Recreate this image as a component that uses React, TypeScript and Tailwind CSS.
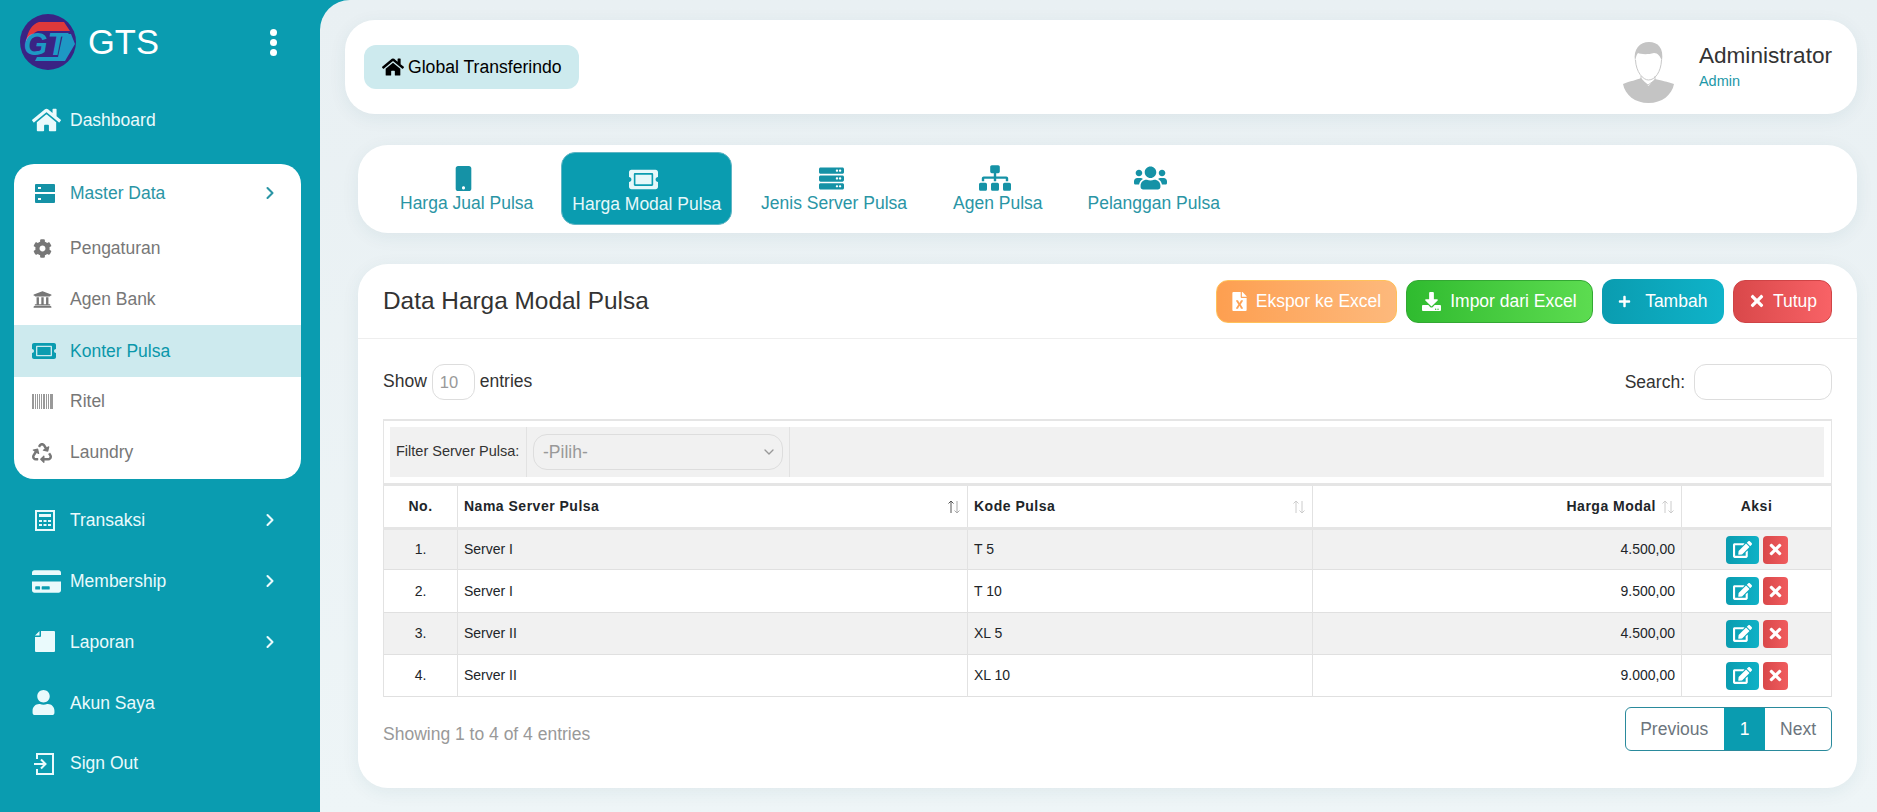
import React from "react";
import {
  FaHome,
  FaCog,
  FaUniversity,
  FaTicketAlt,
  FaRecycle,
  FaCreditCard,
  FaUser,
  FaMobile,
  FaServer,
  FaSitemap,
  FaUsers,
  FaFileExcel,
  FaDownload,
  FaPlus,
  FaTimes,
  FaEdit,
} from "react-icons/fa";
import { ChevronRight, ChevronDown } from "lucide-react";

const FONT = "font-['Liberation_Sans',Arial,sans-serif]";

function LogoMark() {
  return (
    <svg viewBox="0 0 56 56" className="w-[56px] h-[56px] shrink-0">
      <circle cx="28" cy="28" r="28" fill="#3a2384" />
      <path d="M6 27 C8 17 12 10 19 8 L44 8 L50 17 L18 17 C13 19 10 23 9 27 Z" fill="#e0393a" />
      <path d="M43 20 L51 20 L55 30 L45 47 L15 47 L17 43 L38 43 Z" fill="#1d98c4" />
      <text x="25" y="41" textAnchor="middle" fontFamily="Liberation Sans" fontWeight="700" fontStyle="italic" fontSize="31" fill="#1d98c4">
        GT
      </text>
    </svg>
  );
}

function TwoRackIcon() {
  return (
    <svg viewBox="0 0 20 19" className="w-[20px] h-[19px] ml-[3px]" fill="currentColor">
      <path d="M1 0h18a1 1 0 0 1 1 1v7H0V1a1 1 0 0 1 1-1zM3 3v2h3V3zM0 10h20v8a1 1 0 0 1-1 1H1a1 1 0 0 1-1-1zM3 14v2h3v-2z" fillRule="evenodd" />
    </svg>
  );
}

function BarcodeThin() {
  return (
    <svg viewBox="0 0 21 15" className="w-[21px] h-[15px]" fill="#999">
      <rect x="0" width="2" height="15" />
      <rect x="3" width="1" height="15" />
      <rect x="5" width="1" height="15" />
      <rect x="7" width="1" height="15" />
      <rect x="9" width="1" height="15" />
      <rect x="11" width="2" height="15" />
      <rect x="14" width="1" height="15" />
      <rect x="16" width="1" height="15" />
      <rect x="18" width="3" height="15" />
    </svg>
  );
}

function CalcIcon() {
  return (
    <svg viewBox="0 0 20 21" className="w-[20px] h-[21px] ml-[3px]">
      <rect x="1" y="1" width="18" height="19" fill="none" stroke="#eafafc" strokeWidth="2" />
      <rect x="4" y="4" width="12" height="3" fill="#eafafc" />
      <path d="M4 10h3v2H4zM8.500 10h3v2h-3zM13 10h3v2h-3zM4 14h3v2H4zM8.500 14h3v2h-3zM13 14h3v2h-3z" fill="#eafafc" />
    </svg>
  );
}

function FileCutIcon() {
  return (
    <svg viewBox="0 0 20 21" className="w-[20px] h-[21px] ml-[3px]" fill="#eafafc">
      <path d="M6 0h13a1 1 0 0 1 1 1v19a1 1 0 0 1-1 1H1a1 1 0 0 1-1-1V6h5a1 1 0 0 0 1-1zM0 4.500L4.500 0v4.500z" />
    </svg>
  );
}

function SignInIcon() {
  return (
    <svg viewBox="0 0 20 22" className="w-[20px] h-[22px] ml-[2px]" fill="none" stroke="#eafafc" strokeWidth="2">
      <path d="M3 6V1h16v20H3v-5" />
      <path d="M0 11h10" />
      <path d="M7 6.500l4.500 4.500L7 15.500" />
    </svg>
  );
}

function SortArrows({ dark }: { dark?: boolean }) {
  return (
    <svg viewBox="0 0 14 14" className="w-[14px] h-[14px] shrink-0" fill="none" strokeWidth="1">
      <path d="M4 13V1M1.500 3.500L4 1l2.500 2.500" stroke={dark ? "#555" : "#ccc"} />
      <path d="M10 1v12M7.500 10.500L10 13l2.500-2.500" stroke={dark ? "#aaa" : "#ccc"} />
    </svg>
  );
}

function Avatar() {
  return (
    <svg viewBox="0 0 80 75" className="w-[80px] h-[75px] shrink-0">
      <path d="M25 31C23 19 30 12 39 12C48 12 54 18 52 31C50 26 48 23 44 23C37 25 30 24 28 23C26 25 26 28 25 31Z" fill="#c4c4c4" />
      <path d="M25.500 30C26 42 33 50 38.500 50C45 50 51 42 51.500 30" fill="none" stroke="#c8c8c8" strokeWidth="1" />
      <path d="M31 46v4l7 5 7-5v-4" fill="none" stroke="#c8c8c8" strokeWidth="1" />
      <path d="M13 54C20 51 27 50 31 48L38.500 56L45 49C50 50 58 52 64 54C62 65 52 73 38.500 73C25 73 15 65 13 54Z" fill="#c4c4c4" />
    </svg>
  );
}

const MASTER_ITEMS = [
  { label: "Pengaturan", icon: <FaCog className="w-[19px] h-[19px] text-[#777] ml-[1px]" />, h: "h-[52px]" },
  { label: "Agen Bank", icon: <FaUniversity className="w-[19px] h-[19px] text-[#777] ml-[1px]" />, h: "h-[51px]" },
  { label: "Konter Pulsa", icon: <FaTicketAlt className="w-[24px] h-[24px] text-[#0a9cb0]" />, h: "h-[52px]", active: true },
  { label: "Ritel", icon: <BarcodeThin />, h: "h-[49px]" },
  { label: "Laundry", icon: <FaRecycle className="w-[20px] h-[20px] text-[#777]" />, h: "h-[53px]" },
];

const LOWER_ITEMS = [
  { label: "Transaksi", icon: <CalcIcon />, chevron: true },
  { label: "Membership", icon: <FaCreditCard className="w-[29px] h-[29px]" />, chevron: true },
  { label: "Laporan", icon: <FileCutIcon />, chevron: true },
  { label: "Akun Saya", icon: <FaUser className="w-[23px] h-[25px]" /> },
  { label: "Sign Out", icon: <SignInIcon /> },
];

function Sidebar() {
  return (
    <aside className="w-[345px] shrink-0 -mr-[25px] bg-[#0a9cb0] text-[#eafafc] text-[17.5px]">
      <div className="w-[320px]">
        <div className="flex items-center h-[56px] mt-[14px] pl-[20px] pr-[43px]">
          <LogoMark />
          <span className="ml-[12px] text-[34.500px] leading-none text-white">GTS</span>
          <div className="ml-auto flex flex-col gap-[3px]">
            <span className="w-[7px] h-[7px] rounded-full bg-white" />
            <span className="w-[7px] h-[7px] rounded-full bg-white" />
            <span className="w-[7px] h-[7px] rounded-full bg-white" />
          </div>
        </div>
        <div className="flex items-center h-[60px] mt-[20px] pl-[32px]">
          <div className="w-[38px]">
            <FaHome className="w-[29px] h-[26px]" />
          </div>
          <span>Dashboard</span>
        </div>
        <div className="mt-[14px] mx-[14px] w-[287px] bg-white rounded-[20px] overflow-hidden">
          <div className="flex items-center h-[58px] pl-[18px] pr-[21px] text-[#2a95a5]">
            <div className="w-[38px] text-[#1592a6]">
              <TwoRackIcon />
            </div>
            <span>Master Data</span>
            <ChevronRight className="ml-auto w-[20px] h-[20px]" strokeWidth={2.5} />
          </div>
          {MASTER_ITEMS.map((item) => (
            <div
              key={item.label}
              className={`flex items-center pl-[18px] ${item.h} ${
                item.active ? "bg-[#cdeaee] text-[#0a97aa]" : "text-[#777]"
              }`}
            >
              <div className="w-[38px]">{item.icon}</div>
              <span>{item.label}</span>
            </div>
          ))}
        </div>
        <div className="mt-[11px]">
          {LOWER_ITEMS.map((item) => (
            <div key={item.label} className="flex items-center h-[60.800px] pl-[32px] pr-[40px]">
              <div className="w-[38px]">{item.icon}</div>
              <span>{item.label}</span>
              {item.chevron && <ChevronRight className="ml-auto w-[20px] h-[20px]" strokeWidth={2.5} />}
            </div>
          ))}
        </div>
      </div>
    </aside>
  );
}

const CARD_SHADOW = "shadow-[0_4px_18px_rgba(30,80,100,0.07)]";

function TopBar() {
  return (
    <div className={`flex items-center justify-between h-[94px] bg-white rounded-[30px] pl-[19px] pr-[25px] ${CARD_SHADOW}`}>
      <div className="flex items-center h-[44px] w-[215px] pl-[18px] gap-[4px] rounded-[12px] bg-[#cdeaee] text-black text-[17.600px]">
        <FaHome className="w-[22px] h-[20px]" />
        <span>Global Transferindo</span>
      </div>
      <div className="flex items-center">
        <Avatar />
        <div className="ml-[9px] -mt-[3px] flex flex-col">
          <span className="text-[22.600px] leading-[28px] text-[#333]">Administrator</span>
          <span className="mt-[2px] text-[14.500px] leading-[18px] text-[#1d98a8]">Admin</span>
        </div>
      </div>
    </div>
  );
}

const TABS = [
  { label: "Harga Jual Pulsa", icon: <FaMobile className="w-[25px] h-[25px]" /> },
  { label: "Harga Modal Pulsa", icon: <FaTicketAlt className="w-[29px] h-[29px]" />, active: true },
  { label: "Jenis Server Pulsa", icon: <FaServer className="w-[25px] h-[25px]" />, extra: "ml-[1px]" },
  { label: "Agen Pulsa", icon: <FaSitemap className="w-[32px] h-[28px]" />, extra: "ml-[7px]" },
  { label: "Pelanggan Pulsa", icon: <FaUsers className="w-[33px] h-[30px]" />, extra: "ml-[6px]" },
];

function TabBar() {
  return (
    <div className={`ml-[13px] mt-[31px] h-[88px] pt-[7px] pl-[31px] bg-white rounded-[30px] flex gap-[17px] items-start ${CARD_SHADOW}`}>
      {TABS.map((tab) => (
        <div
          key={tab.label}
          className={`h-[73px] rounded-[14px] flex flex-col items-center text-[17.500px] ${tab.extra ?? ""} ${
            tab.active ? "px-[10px] bg-[#0a9cb0] text-[#e6f8fa] border border-[#5fb5c4]" : "px-[11px] text-[#2a95a5]"
          }`}
        >
          <div className={`flex items-center justify-center h-[26px] mt-[13px] mr-[6px] ${tab.active ? "text-[#e6f8fa]" : "text-[#1592a6]"}`}>{tab.icon}</div>
          <span className="mt-[2px] leading-[20px] whitespace-nowrap">{tab.label}</span>
        </div>
      ))}
    </div>
  );
}

const ROWS = [
  { no: "1.", server: "Server I", kode: "T 5", harga: "4.500,00", h: "h-[41px]" },
  { no: "2.", server: "Server I", kode: "T 10", harga: "9.500,00", h: "h-[43px]" },
  { no: "3.", server: "Server II", kode: "XL 5", harga: "4.500,00", h: "h-[42px]" },
  { no: "4.", server: "Server II", kode: "XL 10", harga: "9.000,00", h: "h-[42px]" },
];

function DataTable() {
  return (
    <table className="w-full table-fixed border-collapse text-[14px] text-[#212529]">
      <colgroup>
        <col className="w-[74px]" />
        <col className="w-[510px]" />
        <col className="w-[345px]" />
        <col className="w-[369px]" />
        <col className="w-[150px]" />
      </colgroup>
      <thead>
        <tr className="h-[44px] font-bold tracking-[0.5px] border-b-[3px] border-t-[3px] border-[#e5e5e5]">
          <th className="border-x border-[#e2e2e2] text-center">No.</th>
          <th className="border-x border-[#e2e2e2] px-[6px] text-left">
            <div className="flex items-center justify-between">
              Nama Server Pulsa
              <SortArrows dark />
            </div>
          </th>
          <th className="border-x border-[#e2e2e2] px-[6px] text-left">
            <div className="flex items-center justify-between">
              Kode Pulsa
              <SortArrows />
            </div>
          </th>
          <th className="border-x border-[#e2e2e2] px-[6px]">
            <div className="flex items-center justify-end gap-[5px]">
              Harga Modal
              <SortArrows />
            </div>
          </th>
          <th className="border-x border-[#e2e2e2] text-center">Aksi</th>
        </tr>
      </thead>
      <tbody>
        {ROWS.map((row, i) => (
          <tr key={row.no} className={`${row.h} border-b border-[#e0e0e0] ${i % 2 === 0 ? "bg-[#f1f1f1]" : "bg-white"}`}>
            <td className="border-x border-[#e2e2e2] text-center">{row.no}</td>
            <td className="border-x border-[#e2e2e2] px-[6px]">{row.server}</td>
            <td className="border-x border-[#e2e2e2] px-[6px]">{row.kode}</td>
            <td className="border-x border-[#e2e2e2] px-[6px] text-right">{row.harga}</td>
            <td className="border-x border-[#e2e2e2]">
              <div className="flex items-center justify-center gap-[4px]">
                <button className="flex items-center justify-center w-[33px] h-[28px] rounded-[4px] text-white bg-gradient-to-r from-[#0a9cb0] to-[#0fb1c6]">
                  <FaEdit className="w-[19px] h-[19px]" />
                </button>
                <button className="flex items-center justify-center w-[25px] h-[28px] rounded-[4px] text-white bg-gradient-to-r from-[#d9484a] to-[#f05c5e]">
                  <FaTimes className="w-[17px] h-[17px]" />
                </button>
              </div>
            </td>
          </tr>
        ))}
      </tbody>
    </table>
  );
}

function DataCard() {
  return (
    <div className={`ml-[13px] mt-[31px] h-[524px] bg-white rounded-[30px] text-[17.500px] ${CARD_SHADOW}`}>
      <div className="flex items-center justify-between h-[75px] px-[25px] border-b border-[#eeeeee]">
        <h1 className="text-[24.400px] text-[#333]">Data Harga Modal Pulsa</h1>
        <div className="flex items-center gap-[9px] text-white">
          <button className="flex items-center gap-[9px] h-[43px] px-[15px] rounded-[12px] border border-[#ffc15a] bg-gradient-to-r from-[#fd9f50] to-[#fdb97c]">
            <FaFileExcel className="w-[15px] h-[19px]" />
            Ekspor ke Excel
          </button>
          <button className="flex items-center gap-[9px] h-[43px] px-[15px] rounded-[12px] border border-[#33a833] bg-gradient-to-r from-[#2fbb2f] to-[#5cdc50]">
            <FaDownload className="w-[19px] h-[19px]" />
            Impor dari Excel
          </button>
          <button className="flex items-center gap-[14px] h-[45px] px-[16.500px] rounded-[12px] bg-gradient-to-r from-[#0a9cb0] to-[#0fb3c9]">
            <FaPlus className="w-[13px] h-[13px]" />
            Tambah
          </button>
          <button className="flex items-center gap-[7px] h-[43px] px-[14px] rounded-[12px] border border-[#cf4446] bg-gradient-to-r from-[#d9484a] to-[#f86266]">
            <FaTimes className="w-[18px] h-[18px]" />
            Tutup
          </button>
        </div>
      </div>
      <div className="px-[25px] pt-[25px] text-[#333]">
        <div className="flex items-center justify-between h-[36px]">
          <div className="flex items-center">
            <span className="-mt-[2px]">Show</span>
            <div className="mx-[5px] flex items-center w-[43px] h-[36px] pl-[7px] rounded-[12px] border border-[#dddddd] text-[#999] text-[16.500px]">10</div>
            <span className="-mt-[2px]">entries</span>
          </div>
          <div className="flex items-center gap-[9px]">
            Search:
            <input className="w-[138px] h-[36px] rounded-[12px] border border-[#dddddd] outline-none" />
          </div>
        </div>
        <div className="mt-[19px] border-x border-t-[2px] border-[#e5e5e5] pl-[6px] pr-[7px] py-[6px]">
          <div className="flex items-center h-[50px] bg-[#f1f1f1]">
            <div className="flex items-center w-[137px] h-full pl-[6px] border-r border-[#e2e2e2] text-[14.500px] whitespace-nowrap">Filter Server Pulsa:</div>
            <div className="flex items-center w-[263px] h-full px-[6px] border-r border-[#e2e2e2]">
              <div className="flex items-center justify-between w-full h-[36px] pl-[9px] pr-[5px] rounded-[14px] border border-[#dddddd] text-[#999]">
                -Pilih-
                <ChevronDown className="w-[16px] h-[16px] text-[#999]" />
              </div>
            </div>
          </div>
        </div>
        <DataTable />
        <div className="flex items-start justify-between mt-[10px]">
          <div className="mt-[16px] leading-[22px] text-[#999]">Showing 1 to 4 of 4 entries</div>
          <div className="flex items-stretch h-[44px] rounded-[6px] border border-[#2a8a9c] overflow-hidden text-[#6c757d]">
            <div className="flex items-center pl-[14px] pr-[16px]">Previous</div>
            <div className="flex items-center px-[15.500px] bg-[#0a9cb0] text-white">1</div>
            <div className="flex items-center px-[15px]">Next</div>
          </div>
        </div>
      </div>
    </div>
  );
}

export default function App() {
  return (
    <div className={`flex h-screen overflow-hidden bg-[#0a9cb0] ${FONT}`}>
      <Sidebar />
      <main className="relative flex-1 min-w-0 rounded-tl-[30px] bg-gradient-to-b from-[#e9f0f3] to-[#eef5f7] pl-[25px] pr-[20px] pt-[20px]">
        <TopBar />
        <TabBar />
        <DataCard />
      </main>
    </div>
  );
}
